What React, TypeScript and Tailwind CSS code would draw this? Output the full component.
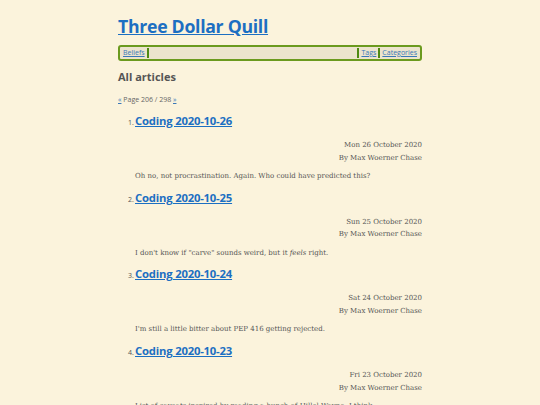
import React from "react";

const articles = [
  {
    title: "Coding 2020-10-26",
    date: "Mon 26 October 2020",
    summary: <>Oh no, not procrastination. Again. Who could have predicted this?</>,
  },
  {
    title: "Coding 2020-10-25",
    date: "Sun 25 October 2020",
    summary: (
      <>
        I don't know if "carve" sounds weird, but it <em>feels</em> right.
      </>
    ),
  },
  {
    title: "Coding 2020-10-24",
    date: "Sat 24 October 2020",
    summary: <>I'm still a little bitter about PEP 416 getting rejected.</>,
  },
  {
    title: "Coding 2020-10-23",
    date: "Fri 23 October 2020",
    summary: <>List of caveats inspired by reading a bunch of Hillel Wayne, I think.</>,
  },
];

const heading = { fontFamily: '"Open Sans", "Noto Sans", sans-serif' };
const body = { fontFamily: '"DejaVu Serif", "Liberation Serif", serif' };

export default function App() {
  return (
    <div className="h-[405px] overflow-hidden w-full bg-[#fbf3dc] text-[#555]">
      <div className="w-[304px] mx-auto pt-[14px]">
        <h1 className="text-[17.7px] font-bold leading-[24px] tracking-[-0.3px]" style={heading}>
          <a href="#" className="text-[#1c6fc2] underline">Three Dollar Quill</a>
        </h1>

        <nav
          className="mt-[7px] flex items-center h-[16px] border-2 border-[#6b9a1e] rounded-[3px] bg-[#ece4cd] px-[2px] text-[7px]"
          style={heading}
        >
          <a href="#" className="text-[#3a78b8] underline px-[1px]">Beliefs</a>
          <span className="w-[2px] h-[10px] bg-[#4e8a12] mx-[1px]" />
          <span className="flex-1" />
          <span className="w-[2px] h-[10px] bg-[#4e8a12] mx-[1px]" />
          <a href="#" className="text-[#3a78b8] underline px-[1px]">Tags</a>
          <span className="w-[2px] h-[10px] bg-[#4e8a12] mx-[1px]" />
          <a href="#" className="text-[#3a78b8] underline px-[1px]">Categories</a>
        </nav>

        <h2 className="mt-[7px] text-[11px] font-bold leading-[18px] text-[#555]" style={heading}>
          All articles
        </h2>

        <p className="mt-[9px] text-[7px] leading-[10px] text-[#666]" style={heading}>
          <a href="#" className="text-[#3a78b8] underline">«</a> Page 206 / 298{" "}
          <a href="#" className="text-[#3a78b8] underline">»</a>
        </p>

        <ol className="mt-[6px] pl-[17px]">
          {articles.map((a, i) => (
            <li key={a.title} className="h-[76.7px]">
              <div className="flex items-baseline">
                <span className="text-[7px] w-[7px] -ml-[7px]" style={heading}>{i + 1}.</span>
                <a
                  href="#"
                  className="text-[11.3px] font-bold leading-[20px] text-[#1c6fc2] underline tracking-[-0.2px]"
                  style={heading}
                >
                  {a.title}
                </a>
              </div>
              <div className="mt-[8px] text-right text-[7px] leading-[12.5px]" style={body}>
                <div>{a.date}</div>
                <div>By Max Woerner Chase</div>
              </div>
              <p className="mt-[6px] text-[7px] leading-[12px]" style={body}>
                {a.summary}
              </p>
            </li>
          ))}
        </ol>
      </div>
    </div>
  );
}
